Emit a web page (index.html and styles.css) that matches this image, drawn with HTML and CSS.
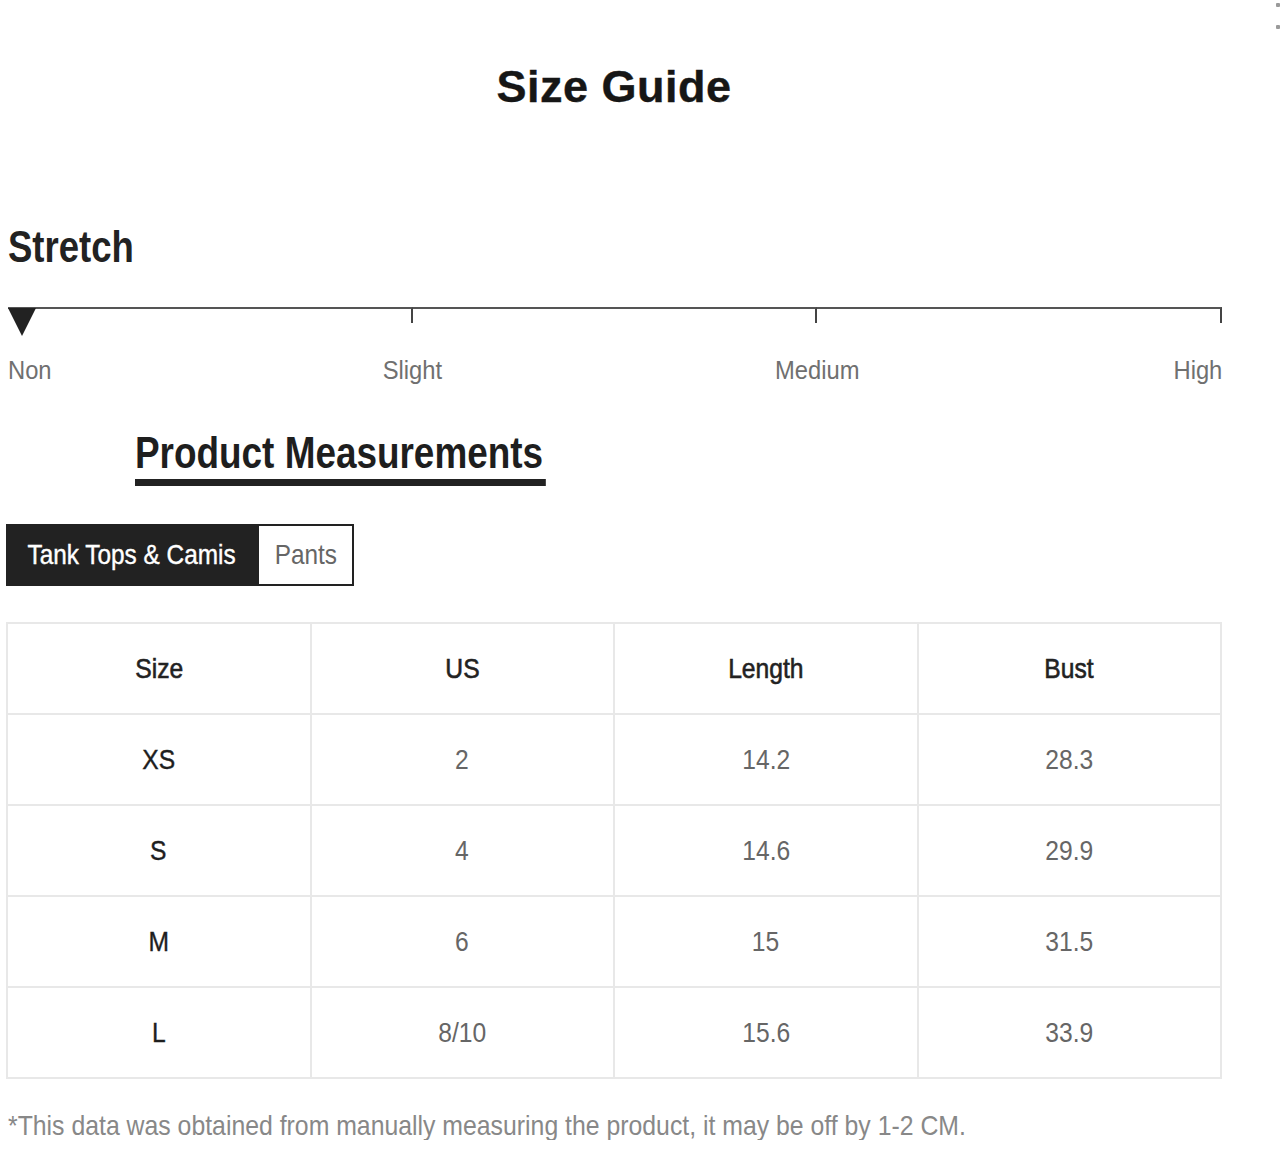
FILE: index.html
```html
<!DOCTYPE html>
<html lang="en">
<head>
<meta charset="utf-8">
<title>Size Guide</title>
<link rel="stylesheet" href="styles.css">
</head>
<body>
<div class="corner-mark"><span></span><span></span></div>
<main class="page">
  <h1 class="title">Size Guide</h1>

  <section class="stretch">
    <h2 class="stretch-title">Stretch</h2>
    <div class="track">
      <span class="marker"></span>
      <div class="seg"></div>
      <div class="seg"></div>
      <div class="seg"></div>
    </div>
    <div class="levels">
      <span class="lvl lvl-non">Non</span>
      <span class="lvl lvl-slight">Slight</span>
      <span class="lvl lvl-medium">Medium</span>
      <span class="lvl lvl-high">High</span>
    </div>
  </section>

  <h2 class="pm-title">Product Measurements</h2>

  <div class="tabs">
    <button class="tab tab-active"><span class="tab-text">Tank Tops &amp; Camis</span></button>
    <button class="tab tab-pants"><span class="tab-text">Pants</span></button>
  </div>

  <table class="sizes">
    <thead>
      <tr><th><span>Size</span></th><th><span>US</span></th><th><span>Length</span></th><th><span>Bust</span></th></tr>
    </thead>
    <tbody>
      <tr><td class="sz"><span>XS</span></td><td><span>2</span></td><td><span>14.2</span></td><td><span>28.3</span></td></tr>
      <tr><td class="sz"><span>S</span></td><td><span>4</span></td><td><span>14.6</span></td><td><span>29.9</span></td></tr>
      <tr><td class="sz"><span>M</span></td><td><span>6</span></td><td><span>15</span></td><td><span>31.5</span></td></tr>
      <tr><td class="sz"><span>L</span></td><td><span>8/10</span></td><td><span>15.6</span></td><td><span>33.9</span></td></tr>
    </tbody>
  </table>

  <p class="note"><span class="note-text">*This data was obtained from manually measuring the product, it may be off by 1-2 CM.</span></p>
</main>
</body>
</html>
```

FILE: styles.css
```css
* { box-sizing: border-box; }

body {
  margin: 0;
  background: #ffffff;
  font-family: "Liberation Sans", Arial, sans-serif;
  color: #222;
}

.corner-mark {
  position: absolute;
  top: 3px;
  right: 0;
  width: 4px;
  display: flex;
  flex-direction: column;
  gap: 18px;
}
.corner-mark span {
  display: block;
  width: 4px;
  height: 4px;
  background: #9a9a9a;
  border-radius: 1px;
}

.page {
  width: 1222px;
  padding-left: 6px;
  padding-top: 64px;
}

.title {
  margin: 0;
  font-weight: 700;
  font-size: 45px;
  line-height: 45px;
  text-align: center;
  color: #161616;
  letter-spacing: 0.5px;
  -webkit-text-stroke: 0.4px #161616;
}

.stretch {
  margin-top: 116px;
  padding-left: 2px;
}

.stretch-title {
  margin: 0;
  font-size: 44px;
  line-height: 44px;
  font-weight: 700;
  color: #222;
  transform: scaleX(0.83);
  transform-origin: left center;
}

.track {
  position: relative;
  margin-top: 38px;
  width: 1214px;
  display: grid;
  grid-template-columns: repeat(3, 1fr);
}
.seg {
  height: 16px;
  border-top: 2px solid #555;
  border-right: 2px solid #444;
}
.marker {
  position: absolute;
  left: 0;
  top: 1px;
  width: 0;
  height: 0;
  border-left: 14px solid transparent;
  border-right: 14px solid transparent;
  border-top: 28px solid #222;
}

.levels {
  margin-top: 34px;
  width: 1214px;
  display: grid;
  grid-template-columns: repeat(6, 1fr);
  font-size: 25px;
  line-height: 26px;
  color: #707070;
}
.lvl { transform: scaleX(0.95); }
.lvl-non { grid-column: 1; text-align: left; transform-origin: left center; }
.lvl-slight { grid-column: 2 / span 2; text-align: center; transform-origin: center; }
.lvl-medium { grid-column: 4 / span 2; text-align: center; transform-origin: center; }
.lvl-high { grid-column: 6; text-align: right; transform-origin: right center; }

.pm-title {
  display: inline-block;
  margin: 47px 0 0 129px;
  padding: 0 3px 4px 0;
  font-size: 45px;
  line-height: 45px;
  font-weight: 700;
  color: #1e1e1e;
  border-bottom: 7px solid #222;
  transform: scaleX(0.82);
  transform-origin: left center;
}

.tabs {
  display: flex;
  margin-top: 38px;
}
.tab {
  height: 62px;
  margin: 0;
  padding: 0;
  font-family: inherit;
  font-size: 28px;
  line-height: 1;
  border: 2px solid #222;
  background: #fff;
  color: #666;
  text-align: center;
  white-space: nowrap;
  overflow: visible;
}
.tab-active {
  width: 251px;
  background: #222;
  color: #fff;
  -webkit-text-stroke: 0.4px #fff;
}
.tab-pants {
  width: 97px;
}
.tab-text {
  display: inline-block;
  transform: scaleX(0.87);
  transform-origin: center;
}

.sizes {
  margin-top: 36px;
  width: 1216px;
  table-layout: fixed;
  border-collapse: collapse;
  font-size: 28px;
}
.sizes th,
.sizes td {
  height: 91px;
  border: 2px solid #e8e8e8;
  text-align: center;
  vertical-align: middle;
  padding: 0;
}
.sizes span {
  display: inline-block;
  transform: scaleX(0.88);
  transform-origin: center;
}
.sizes th {
  font-weight: 400;
  color: #222;
  -webkit-text-stroke: 0.6px #222;
}
.sizes td {
  color: #666;
}
.sizes td.sz {
  color: #1e1e1e;
  -webkit-text-stroke: 0.4px #1e1e1e;
}

.note {
  margin: 33px 0 0 2px;
  font-size: 28px;
  line-height: 28px;
  color: #888;
  white-space: nowrap;
}
.note-text {
  display: inline-block;
  transform: scaleX(0.886);
  transform-origin: left center;
}
```
